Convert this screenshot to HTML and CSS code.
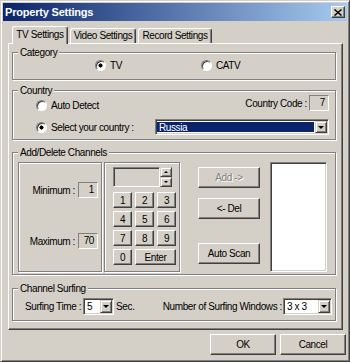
FILE: index.html
```html
<!DOCTYPE html>
<html lang="en">
<head>
  <meta charset="UTF-8">
  <title>Property Settings</title>
  <link rel="stylesheet" href="styles.css">
</head>
<body>
  <div class="window">
    <div class="titlebar">
      <span class="title">Property Settings</span>
      <span class="close">
        <svg width="8" height="7" viewBox="0 0 8 7"><path d="M0.5 0.5l7 6M7.5 0.5l-7 6" stroke="#000" stroke-width="1.5" fill="none"/></svg>
      </span>
    </div>

    <div class="tabs">
      <div class="tab active tv">TV Settings</div>
      <div class="tab video">Video Settings</div>
      <div class="tab record">Record Settings</div>
    </div>

    <div class="panel">
      <fieldset class="group category">
        <legend>Category</legend>
        <div class="category-row">
          <label class="option"><span class="radio checked"></span>TV</label>
          <label class="option"><span class="radio"></span>CATV</label>
        </div>
      </fieldset>

      <fieldset class="group country">
        <legend>Country</legend>
        <div class="country-row first">
          <label class="option auto"><span class="radio"></span>Auto Detect</label>
          <div class="code">
            <span>Country Code :</span>
            <span class="static">7</span>
          </div>
        </div>
        <div class="country-row">
          <label class="option"><span class="radio checked"></span>Select your country :</label>
          <div class="combo country-combo">
            <span class="combo-value selected">Russia</span>
            <span class="drop"><span class="arrow"></span></span>
          </div>
        </div>
      </fieldset>

      <fieldset class="group channels">
        <legend>Add/Delete Channels</legend>
        <div class="channels-row">
          <div class="etched range">
            <div class="range-row"><span>Minimum :</span><span class="static">1</span></div>
            <div class="range-row"><span>Maximum :</span><span class="static">70</span></div>
          </div>

          <div class="etched keypad">
            <div class="keypad-top">
              <span class="display"></span>
              <span class="spin">
                <span class="spin-btn"><span class="arrow up"></span></span>
                <span class="spin-btn"><span class="arrow"></span></span>
              </span>
            </div>
            <div class="keys">
              <button class="key">1</button>
              <button class="key">2</button>
              <button class="key">3</button>
              <button class="key">4</button>
              <button class="key">5</button>
              <button class="key">6</button>
              <button class="key">7</button>
              <button class="key">8</button>
              <button class="key">9</button>
              <button class="key">0</button>
              <button class="key enter">Enter</button>
            </div>
          </div>

          <div class="channel-actions">
            <button class="btn add" disabled>Add -&gt;</button>
            <button class="btn del">&lt;- Del</button>
            <button class="btn scan">Auto Scan</button>
          </div>

          <div class="listbox"></div>
        </div>
      </fieldset>

      <fieldset class="group surfing">
        <legend>Channel Surfing</legend>
        <div class="surf-row">
          <span>Surfing Time :</span>
          <div class="combo time-combo">
            <span class="combo-value">5</span>
            <span class="drop"><span class="arrow"></span></span>
          </div>
          <span class="sec">Sec.</span>
          <span class="windows-label">Number of Surfing Windows :</span>
          <div class="combo windows-combo">
            <span class="combo-value">3 x 3</span>
            <span class="drop"><span class="arrow"></span></span>
          </div>
        </div>
      </fieldset>
    </div>

    <div class="dialog-buttons">
      <button class="btn">OK</button>
      <button class="btn">Cancel</button>
    </div>
  </div>
</body>
</html>
```

FILE: styles.css
```css
body {
  margin: 0;
  font-family: "Liberation Sans", Arial, sans-serif;
  font-size: 10px;
  letter-spacing: -0.4px;
  white-space: nowrap;
  color: #000;
  background: #d4d0c8;
}
.window {
  width: 350px;
  height: 362px;
  box-sizing: border-box;
  padding: 2px;
  background: #d4d0c8;
  border: 1px solid;
  border-color: #d4d0c8 #404040 #404040 #d4d0c8;
  box-shadow: inset 1px 1px #fff, inset -1px -1px #808080;
}
.titlebar {
  display: flex;
  align-items: center;
  justify-content: space-between;
  height: 18px;
  padding-left: 2px;
  background: linear-gradient(to right, #0a246a, #a6caf0);
}
.title {
  font-size: 11px;
  font-weight: bold;
  color: #fff;
  letter-spacing: -0.2px;
}
.close {
  display: flex;
  align-items: center;
  justify-content: center;
  width: 14px;
  height: 12px;
  margin-right: 2px;
  box-sizing: border-box;
  background: #d4d0c8;
  border: 1px solid;
  border-color: #fff #404040 #404040 #fff;
  box-shadow: inset -1px -1px #808080;
}

/* tabs */
.tabs {
  display: flex;
  align-items: flex-end;
  margin-top: 5px;
  padding-left: 9px;
}
.tab {
  box-sizing: border-box;
  height: 15px;
  margin-left: 2px;
  line-height: 13px;
  text-align: center;
  border: 1px solid;
  border-bottom: 0;
  border-color: #fff #404040 #404040 #fff;
  border-radius: 3px 3px 0 0;
  box-shadow: inset -1px 0 #808080;
}
.tab.tv { width: 56px; }
.tab.video { width: 66px; }
.tab.record { width: 74px; }
.tab.active {
  position: relative;
  z-index: 1;
  height: 18px;
  margin-left: 0;
  margin-bottom: -1px;
  padding-top: 1px;
  background: #d4d0c8;
}
.panel {
  width: 335px;
  height: 287px;
  margin-left: 5px;
  box-sizing: border-box;
  padding: 2px 0 0 3px;
  border: 1px solid;
  border-color: #fff #404040 #404040 #fff;
  box-shadow: inset -1px -1px #808080;
}

/* group boxes */
.group {
  margin: 0;
  padding: 0;
  min-width: 0;
  width: 324px;
  box-sizing: border-box;
  border: 1px solid #808080;
  box-shadow: inset 1px 1px #fff, 1px 1px #fff;
}
.group legend {
  margin-left: 5px;
  padding: 0 2px;
  line-height: 13px;
  background: #d4d0c8;
}
.category { height: 34px; }
.country { height: 56px; margin-top: 4px; }
.channels { height: 129px; margin-top: 6px; }
.surfing { height: 39px; margin-top: 7px; }

.option {
  display: flex;
  align-items: center;
  line-height: 13px;
}
.radio {
  width: 11px;
  height: 11px;
  margin-right: 4px;
  box-sizing: border-box;
  border-radius: 50%;
  background: #fff;
  border: 1px solid;
  border-color: #808080 #fff #fff #808080;
  box-shadow: inset 1px 1px #404040;
}
.radio.checked {
  background: radial-gradient(circle at 50% 50%, #000 0 1.8px, #fff 2.3px);
}
.category-row {
  display: grid;
  grid-template-columns: 106px auto;
  padding-left: 82px;
}

/* country */
.country-row {
  display: flex;
  align-items: center;
  padding: 0 6px 0 23px;
}
.country-row.first {
  align-items: flex-start;
}
.option.auto { margin-top: 2px; }
.code {
  display: flex;
  align-items: center;
  margin-left: auto;
  margin-top: -2px;
}
.static {
  width: 20px;
  height: 16px;
  box-sizing: border-box;
  margin-left: 2px;
  padding-right: 3px;
  line-height: 14px;
  text-align: right;
  border: 1px solid;
  border-color: #808080 #fff #fff #808080;
}
.country-row + .country-row { margin-top: 7px; }

.combo {
  display: flex;
  box-sizing: border-box;
  background: #fff;
  border: 1px solid;
  border-color: #808080 #fff #fff #808080;
  box-shadow: inset 1px 1px #404040, inset -1px -1px #d4d0c8;
  padding: 1px;
}
.combo-value {
  flex: 1;
  padding-left: 2px;
  line-height: 13px;
}
.combo-value.selected {
  background: #0a246a;
  color: #fff;
  margin: 1px 1px 1px 0;
  line-height: 11px;
}
.drop {
  display: flex;
  align-items: center;
  justify-content: center;
  width: 12px;
  box-sizing: border-box;
  background: #d4d0c8;
  border: 1px solid;
  border-color: #d4d0c8 #404040 #404040 #d4d0c8;
  box-shadow: inset 1px 1px #fff, inset -1px -1px #808080;
}
.arrow {
  width: 0;
  height: 0;
  border-left: 3px solid transparent;
  border-right: 3px solid transparent;
  border-top: 3px solid #000;
}
.arrow.up {
  border-top: 0;
  border-bottom: 3px solid #000;
}
.country-combo {
  width: 174px;
  height: 16px;
  margin-left: auto;
}

/* add / delete channels */
.channels-row {
  display: flex;
  margin-top: 3px;
  padding-left: 5px;
}
.etched {
  height: 110px;
  box-sizing: border-box;
  border: 1px solid #808080;
  box-shadow: inset 1px 1px #fff, 1px 1px #fff;
}
.range {
  width: 84px;
  display: flex;
  flex-direction: column;
  align-items: flex-end;
  gap: 35px;
  padding: 19px 3px 0 0;
}
.range-row {
  display: flex;
  align-items: center;
  gap: 1px;
}
.keypad {
  width: 76px;
  margin-left: 2px;
  padding: 4px 0 0 8px;
}
.keypad-top {
  display: flex;
}
.display {
  width: 47px;
  height: 20px;
  box-sizing: border-box;
  border: 1px solid;
  border-color: #808080 #fff #fff #808080;
  box-shadow: inset 1px 1px #404040, inset -1px -1px #d4d0c8;
}
.spin {
  display: flex;
  flex-direction: column;
  width: 12px;
}
.spin-btn {
  display: flex;
  align-items: center;
  justify-content: center;
  height: 10px;
  box-sizing: border-box;
  border: 1px solid;
  border-color: #d4d0c8 #404040 #404040 #d4d0c8;
  box-shadow: inset 1px 1px #fff, inset -1px -1px #808080;
}
.spin-btn .arrow {
  border-left-width: 2px;
  border-right-width: 2px;
  border-top-width: 2px;
}
.spin-btn .arrow.up {
  border-top-width: 0;
  border-bottom-width: 2px;
}
.keys {
  display: grid;
  grid-template-columns: repeat(3, 19px);
  grid-auto-rows: 16px;
  gap: 3px;
  margin-top: 5px;
}
.key, .btn {
  margin: 0;
  padding: 0;
  font: inherit;
  letter-spacing: inherit;
  color: #000;
  background: #d4d0c8;
  border: 1px solid;
  border-color: #fff #404040 #404040 #fff;
  box-shadow: inset -1px -1px #808080;
  border-radius: 0;
  line-height: 13px;
}
.key.enter { grid-column: span 2; }
.btn:disabled {
  color: #808080;
  text-shadow: 1px 1px #fff;
}
.channel-actions {
  display: flex;
  flex-direction: column;
  width: 62px;
  margin-left: 18px;
  padding-top: 5px;
}
.channel-actions .btn { height: 21px; }
.channel-actions .del { margin-top: 10px; }
.channel-actions .scan { margin-top: 24px; }
.listbox {
  width: 57px;
  height: 110px;
  margin-left: 10px;
  box-sizing: border-box;
  background: #fff;
  border: 1px solid;
  border-color: #808080 #fff #fff #808080;
  box-shadow: inset 1px 1px #404040, inset -1px -1px #d4d0c8;
}

/* channel surfing */
.surf-row {
  display: flex;
  align-items: center;
  padding: 3px 3px 0 12px;
  line-height: 13px;
}
.time-combo {
  width: 31px;
  height: 17px;
  margin-left: 2px;
}
.sec { margin-left: 2px; }
.windows-label { margin-left: auto; }
.windows-combo {
  width: 49px;
  height: 17px;
  margin-left: 1px;
}

/* dialog buttons */
.dialog-buttons {
  display: flex;
  justify-content: flex-end;
  gap: 4px;
  margin-top: 4px;
  padding-right: 1px;
}
.dialog-buttons .btn {
  width: 66px;
  height: 21px;
}
```
